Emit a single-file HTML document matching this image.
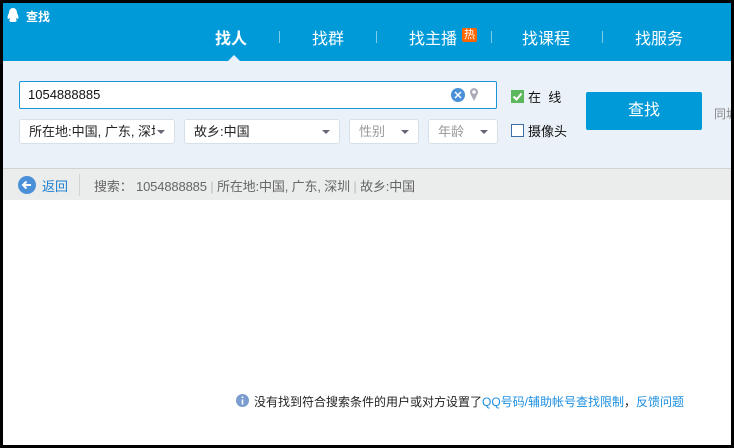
<!DOCTYPE html>
<html><head><meta charset="utf-8"><style>
*{margin:0;padding:0;box-sizing:border-box}
body{width:734px;height:448px;background:#000;position:relative;overflow:hidden;font-family:"Liberation Sans","Noto Sans CJK SC",sans-serif}
.a{position:absolute;white-space:nowrap}
.win{left:3px;top:3px;width:728px;height:442px;background:#fff;overflow:hidden}
.hdr{left:0;top:0;width:728px;height:58px;background:#009ad8}
.tab{color:#fff;font-size:16px;top:22px}
.sep{top:28px;width:1px;height:12px;background:#7fcbea}
.panel{left:0;top:58px;width:728px;height:107px;background:#eaf1f9}
.bar{left:0;top:165px;width:728px;height:32px;background:#ebecec;border-top:1px solid #cfd3d6}
.sel{height:25px;background:#fff;border:1px solid #d7dfe7;border-radius:3px;font-size:13px;line-height:23px;padding-left:9px;color:#222}
.sel .t{display:block;overflow:hidden;width:126px}
.sel .tri{position:absolute;right:9px;top:10px;width:0;height:0;border-left:4px solid transparent;border-right:4px solid transparent;border-top:4px solid #667}
.gray{color:#999}
</style></head><body>
<div class="a win">
 <div class="a hdr">
  <svg class="a" style="left:4px;top:5px" width="12" height="14" viewBox="0 0 12 14"><path d="M6 0C3 0 2 3 2 5 1 7 0 9 1 11 2 11 2 10 3 10 3 12 1 13 4 14H8C11 13 9 12 9 10 10 10 10 11 11 11 12 9 11 7 10 5 10 3 9 0 6 0Z" fill="#fff"/></svg>
  <div class="a" style="left:23px;top:5px;color:#fff;font-size:12px;font-weight:bold">查找</div>
  <div class="a tab" style="left:212px;font-weight:bold">找人</div>
  <div class="a" style="left:225px;top:52px;width:0;height:0;border-left:6px solid transparent;border-right:6px solid transparent;border-bottom:6px solid #eaf1f9"></div>
  <div class="a sep" style="left:276px"></div>
  <div class="a tab" style="left:309px">找群</div>
  <div class="a sep" style="left:373px"></div>
  <div class="a tab" style="left:406px">找主播</div>
  <div class="a" style="left:459px;top:25px;width:15px;height:14px;background:#f60;color:#fff;font-size:11px;line-height:14px;text-align:center;border-radius:2px">热</div>
  <div class="a sep" style="left:488px"></div>
  <div class="a tab" style="left:519px">找课程</div>
  <div class="a sep" style="left:599px"></div>
  <div class="a tab" style="left:632px">找服务</div>
 </div>
 <div class="a panel">
  <div class="a" style="left:16px;top:20px;width:478px;height:28px;background:#fff;border:1px solid #1c95d8;border-radius:2px;font-size:13px;line-height:26px;padding-left:8px;color:#111">1054888885</div>
  <svg class="a" style="left:448px;top:27px" width="14" height="14" viewBox="0 0 14 14"><circle cx="7" cy="7" r="7" fill="#4a90d9"/><path d="M4 4L10 10M10 4L4 10" stroke="#fff" stroke-width="1.5"/></svg>
  <svg class="a" style="left:466px;top:26px" width="10" height="15" viewBox="0 0 10 15"><path d="M5 14L1.5 7A4 4 0 1 1 8.5 7Z" fill="#aab"/><circle cx="5" cy="5" r="1.8" fill="#fff"/></svg>
  <div class="a sel" style="left:16px;top:58px;width:156px"><span class="t">所在地:中国, 广东, 深圳</span><span class="tri"></span></div>
  <div class="a sel" style="left:181px;top:58px;width:156px">故乡:中国<span class="tri"></span></div>
  <div class="a sel gray" style="left:346px;top:58px;width:70px">性别<span class="tri"></span></div>
  <div class="a sel gray" style="left:425px;top:58px;width:70px">年龄<span class="tri"></span></div>
  <div class="a" style="left:508px;top:29px;width:13px;height:13px;background:#5cb85c"><svg width="13" height="13"><path d="M2.5 6.5L5.5 9.5L10.5 3.5" stroke="#fff" stroke-width="2" fill="none"/></svg></div>
  <div class="a" style="left:525px;top:26px;font-size:13px;color:#111">在&nbsp;&nbsp;线</div>
  <div class="a" style="left:508px;top:63px;width:13px;height:13px;background:#fff;border:1px solid #3a6ea5"></div>
  <div class="a" style="left:525px;top:60px;font-size:13px;color:#111">摄像头</div>
  <div class="a" style="left:583px;top:31px;width:116px;height:38px;background:#009ad8;border-radius:2px;color:#fff;font-size:16px;line-height:38px;text-align:center">查找</div>
  <div class="a" style="left:711px;top:44px;font-size:12px;color:#888">同城</div>
 </div>
 <div class="a bar">
  <svg class="a" style="left:15px;top:7px" width="18" height="18" viewBox="0 0 18 18"><circle cx="9" cy="9" r="9" fill="#4a90d9"/><path d="M13 9H5M8.5 5.5L5 9L8.5 12.5" stroke="#fff" stroke-width="2" fill="none"/></svg>
  <div class="a" style="left:39px;top:7px;font-size:13px;color:#1b7fd1">返回</div>
  <div class="a" style="left:76px;top:5px;width:1px;height:22px;background:#d2d4d6"></div>
  <div class="a" style="left:91px;top:7px;font-size:13px;color:#666;letter-spacing:-0.15px">搜索： 1054888885 <span style="color:#bbb">|</span> 所在地:中国, 广东, 深圳 <span style="color:#bbb">|</span> 故乡:中国</div>
 </div>
 <svg class="a" style="left:233px;top:391px" width="13" height="13" viewBox="0 0 13 13"><circle cx="6.5" cy="6.5" r="6.5" fill="#7a9ccf"/><rect x="5.7" y="5.5" width="1.6" height="5" fill="#fff"/><rect x="5.7" y="2.5" width="1.6" height="1.6" fill="#fff"/></svg>
 <div class="a" style="left:251px;top:390px;font-size:12px;color:#222">没有找到符合搜索条件的用户或对方设置了<span style="color:#1b8fe0">QQ号码/辅助帐号查找限制</span>，<span style="color:#1b8fe0">反馈问题</span></div>
</div>
</body></html>
